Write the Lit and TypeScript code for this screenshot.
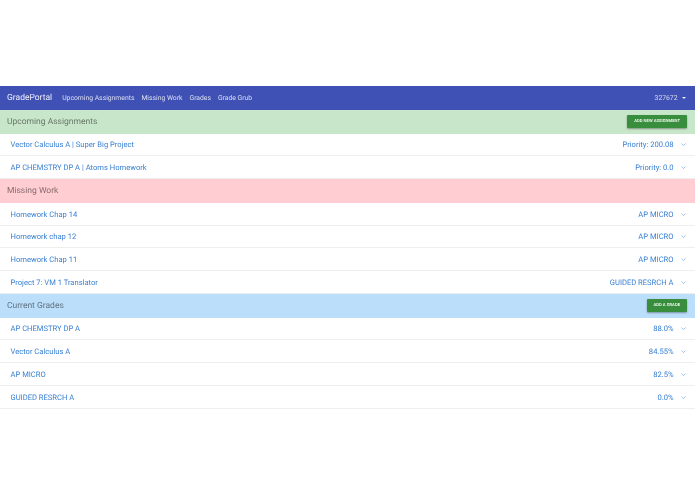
import {css, html, LitElement} from 'lit';
import {customElement} from 'lit/decorators.js';

const chevron = html`<svg class="chev" viewBox="0 0 10 6"><path d="M1 1 5 5l4-4" /></svg>`;

const sections = [
  {
    title: 'Upcoming Assignments',
    tone: 'green',
    action: 'Add new assignment',
    rows: [
      ['Vector Calculus A | Super Big Project', 'Priority: 200.08'],
      ['AP CHEMSTRY DP A | Atoms Homework', 'Priority: 0.0'],
    ],
  },
  {
    title: 'Missing Work',
    tone: 'red',
    action: '',
    rows: [
      ['Homework Chap 14', 'AP MICRO'],
      ['Homework chap 12', 'AP MICRO'],
      ['Homework Chap 11', 'AP MICRO'],
      ['Project 7: VM 1 Translator', 'GUIDED RESRCH A'],
    ],
  },
  {
    title: 'Current Grades',
    tone: 'blue',
    action: 'Add a grade',
    rows: [
      ['AP CHEMSTRY DP A', '88.0%'],
      ['Vector Calculus A', '84.55%'],
      ['AP MICRO', '82.5%'],
      ['GUIDED RESRCH A', '0.0%'],
    ],
  },
];

@customElement('app-root')
class AppRoot extends LitElement {
  override render() {
    return html`
      <nav>
        <span class="brand">GradePortal</span>
        <a>Upcoming Assignments</a>
        <a>Missing Work</a>
        <a>Grades</a>
        <a>Grade Grub</a>
        <span class="user">327672<i class="caret"></i></span>
      </nav>
      ${sections.map(
        (s) => html`
          <header class=${s.tone}>
            <span>${s.title}</span>
            ${s.action ? html`<button>${s.action}</button>` : ''}
          </header>
          ${s.rows.map(
            (r) => html`
              <div class="row">
                <span>${r[0]}</span>
                <span class="right">${r[1]}${chevron}</span>
              </div>
            `,
          )}
        `,
      )}
    `;
  }

  static override styles = css`
    :host {
      display: block;
      height: 494px;
      padding-top: 86px;
      box-sizing: border-box;
      background: #fff;
      font-family: Roboto, sans-serif;
      text-rendering: geometricPrecision;
      overflow: hidden;
      filter: blur(0.3px);
    }

    nav {
      display: flex;
      align-items: center;
      height: 24px;
      padding: 0 9.5px 0 7px;
      background: #3f51b5;
      color: rgba(255, 255, 255, 0.8);
      font-size: 6.8px;
      box-sizing: border-box;
    }

    .brand {
      font-size: 8.5px;
      color: rgba(255, 255, 255, 0.9);
      margin-right: 6.5px;
    }

    nav a {
      padding: 0 3.5px;
    }

    .user {
      margin-left: auto;
      display: flex;
      align-items: center;
      gap: 4px;
    }

    .caret {
      width: 0;
      height: 0;
      border-left: 2px solid transparent;
      border-right: 2px solid transparent;
      border-top: 2px solid rgba(255, 255, 255, 0.9);
    }

    header {
      display: flex;
      align-items: center;
      justify-content: space-between;
      height: 23.5px;
      padding: 0 8px 0 7px;
      font-size: 8.5px;
      color: rgba(0, 0, 0, 0.5);
      box-sizing: border-box;
    }

    .green {
      background: #c8e6c9;
    }

    .red {
      background: #ffcdd2;
    }

    .blue {
      background: #bbdefb;
    }

    button {
      height: 13px;
      padding: 0 7px;
      border: 0;
      border-radius: 1px;
      background: #388e3c;
      color: #fff;
      font-family: inherit;
      font-size: 4.2px;
      font-weight: 500;
      text-rendering: inherit;
      text-transform: uppercase;
      box-shadow: 0 1px 2px rgba(0, 0, 0, 0.35);
    }

    .row {
      display: flex;
      align-items: center;
      justify-content: space-between;
      height: 22.85px;
      padding: 1px 9.5px 0 10.5px;
      font-size: 7.6px;
      color: #3a80d2;
      border-bottom: 0.6px solid #eee;
      box-sizing: border-box;
    }

    .right {
      display: flex;
      align-items: center;
      gap: 7px;
    }

    .chev {
      width: 5px;
      height: 3px;
      fill: none;
      stroke: #3a80d2;
      stroke-width: 1.2;
      opacity: 0.8;
    }
  `;
}
